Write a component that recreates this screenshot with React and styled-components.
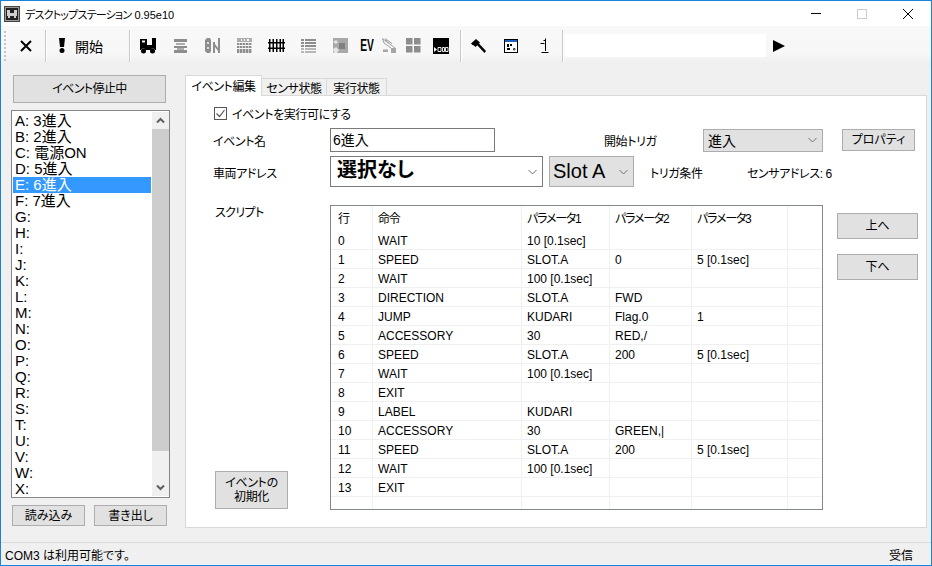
import React from "react";
import styled, { createGlobalStyle } from "styled-components";

const GlobalStyle = createGlobalStyle`
  html, body { margin: 0; padding: 0; background: #f0f0f0; }
  * { box-sizing: border-box; }
  body {
    font-family: "Liberation Sans", "Noto Sans CJK JP", sans-serif;
    font-size: 12px;
    color: #000;
    font-feature-settings: "palt";
  }
`;

const Window = styled.div`
  width: 932px;
  height: 566px;
  border: 1px solid #1883d7;
  background: #f0f0f0;
  display: flex;
  flex-direction: column;
  overflow: hidden;
`;

const TitleBar = styled.div`
  height: 25px;
  flex: none;
  background: #fff;
  display: flex;
  align-items: center;
  padding-left: 3px;
`;

const TitleText = styled.div`
  margin-left: 5px;
  font-size: 11px;
  flex: 1;
`;

const TitleKana = styled.span`
  letter-spacing: -0.8px;
`;

const WinButton = styled.div`
  width: 46px;
  height: 25px;
  display: flex;
  align-items: center;
  justify-content: center;
`;

const Toolbar = styled.div`
  height: 39px;
  flex: none;
  display: flex;
  align-items: center;
  background: linear-gradient(#f8f8f8 0%, #f7f7f7 70%, #eeeeee 100%);
  padding-left: 3px;
`;

const Grip = styled.div`
  width: 2px;
  height: 30px;
  margin-right: 4px;
  flex: none;
  background: repeating-linear-gradient(#c4c4c4 0 2px, transparent 2px 4px);
`;

const ToolSep = styled.div`
  width: 1px;
  height: 32px;
  background: #c8c8c8;
  box-shadow: 1px 0 0 #fff;
  flex: none;
  margin: ${(p) => p.$margin};
`;

const ToolIcon = styled.div`
  width: ${(p) => p.$w || 32}px;
  height: 24px;
  flex: none;
  display: flex;
  align-items: center;
  justify-content: center;
  color: ${(p) => (p.$off ? "#8d8d8d" : "#000")};
`;

const StartTool = styled(ToolIcon)`
  justify-content: flex-start;
  padding-left: 11px;
`;

const StartLabel = styled.span`
  font-size: 14px;
  margin-left: 10px;
`;

const EvLabel = styled.span`
  font-size: 16.5px;
  font-weight: 700;
  transform: scaleX(0.62);
`;

const ToolInput = styled.div`
  width: 201px;
  height: 23px;
  background: #fff;
  flex: none;
`;

const Body = styled.div`
  flex: 1;
  display: flex;
  padding: 10px 4px 16px 10px;
  gap: 15px;
  min-height: 0;
`;

const LeftColumn = styled.div`
  width: 159px;
  flex: none;
  display: flex;
  flex-direction: column;
`;

const Button = styled.div`
  background: #e1e1e1;
  border: 1px solid #adadad;
  display: flex;
  align-items: center;
  justify-content: center;
  text-align: center;
  font-size: 12px;
  line-height: 14px;
  flex: none;
  width: ${(p) => p.$w}px;
  height: ${(p) => p.$h}px;
`;

const StopButton = styled(Button)`
  margin: 0 0 7px 2px;
  letter-spacing: -0.6px;
`;

const ListBox = styled.div`
  width: 159px;
  height: 388px;
  flex: none;
  background: #fff;
  border: 1px solid #828790;
  padding: 2px 0 1px 1px;
  display: flex;
  overflow: hidden;
`;

const ListItems = styled.div`
  width: 138px;
  overflow: hidden;
  flex: none;
`;

const ListRow = styled.div`
  height: 16px;
  line-height: 16px;
  font-size: 15px;
  padding-left: 2px;
  white-space: nowrap;
  background: ${(p) => (p.$selected ? "#3399ff" : "transparent")};
  color: ${(p) => (p.$selected ? "#fff" : "#000")};
`;

const ScrollBar = styled.div`
  width: 17px;
  margin: -1px 0 0 1px;
  background: #f0f0f0;
  display: flex;
  flex-direction: column;
  flex: none;
`;

const ScrollArrow = styled.div`
  height: 17px;
  flex: none;
  display: flex;
  align-items: center;
  justify-content: center;
`;

const ScrollThumb = styled.div`
  flex: 1;
  background: #cdcdcd;
  margin-bottom: 28px;
`;

const FileButtons = styled.div`
  display: flex;
  gap: 9px;
  margin: 7px 0 0 1px;
`;

const RightColumn = styled.div`
  flex: 1;
  display: flex;
  flex-direction: column;
  min-width: 0;
`;

const Tabs = styled.div`
  display: flex;
  height: 21px;
  flex: none;
  align-items: flex-end;
  margin-bottom: -1px;
  position: relative;
  z-index: 1;
`;

const Tab = styled.div`
  height: ${(p) => (p.$active ? 21 : 18)}px;
  width: ${(p) => p.$w}px;
  background: ${(p) => (p.$active ? "#fff" : "#f0f0f0")};
  border: 1px solid #d9d9d9;
  border-left-width: ${(p) => (p.$active ? 1 : 0)}px;
  border-bottom-width: ${(p) => (p.$active ? 0 : 1)}px;
  display: flex;
  align-items: center;
  justify-content: center;
  font-size: 12px;
  letter-spacing: -0.4px;
  padding-bottom: ${(p) => (p.$active ? 1 : 0)}px;
`;

const Panel = styled.div`
  width: 742px;
  height: 433px;
  flex: none;
  background: #fff;
  border: 1px solid #d9d9d9;
  padding: 8px 0 0 27px;
  display: flex;
  flex-direction: column;
`;

const CheckRow = styled.div`
  display: flex;
  align-items: center;
  height: 18px;
  margin-left: 1px;
  gap: 5px;
  letter-spacing: -0.4px;
`;

const CheckBox = styled.div`
  width: 13px;
  height: 13px;
  border: 1px solid #555;
  background: #fff;
  display: flex;
  align-items: center;
  justify-content: center;
`;

const FormRow = styled.div`
  display: flex;
  align-items: center;
  flex: none;
  height: ${(p) => p.$h}px;
  margin-top: ${(p) => p.$top || 0}px;
`;

const FieldLabel = styled.div`
  width: ${(p) => p.$w}px;
  flex: none;
  font-size: 12px;
  letter-spacing: -0.4px;
  white-space: nowrap;
  padding-left: ${(p) => p.$pad || 0}px;
  padding-top: ${(p) => p.$drop || 0}px;
`;

const TextField = styled.div`
  width: 165px;
  height: 24px;
  border: 1px solid #7a7a7a;
  background: #fff;
  font-size: 14px;
  line-height: 22px;
  padding-left: 2px;
  flex: none;
`;

const Select = styled.div`
  width: ${(p) => p.$w}px;
  height: ${(p) => p.$h}px;
  flex: none;
  background: ${(p) => (p.$white ? "#fff" : "#e1e1e1")};
  border: 1px solid ${(p) => (p.$white ? "#7a7a7a" : "#adadad")};
  font-size: ${(p) => p.$size}px;
  font-weight: ${(p) => (p.$bold ? 700 : 400)};
  margin-left: ${(p) => p.$gap || 0}px;
  display: flex;
  align-items: center;
  justify-content: space-between;
  padding: 0 5px 0 ${(p) => p.$pad}px;
  white-space: nowrap;
`;

const LiftedText = styled.span`
  margin-top: -6px;
`;

const PropertyButton = styled(Button)`
  margin-left: 19px;
`;

const ScriptArea = styled.div`
  display: flex;
  flex: none;
  margin-top: 18px;
`;

const ScriptSide = styled.div`
  width: 117px;
  height: 305px;
  flex: none;
  display: flex;
  flex-direction: column;
  justify-content: space-between;
  padding-bottom: 1px;
`;

const ScriptLabel = styled.div`
  font-size: 12px;
  letter-spacing: -0.6px;
  margin: -2px 0 0 2px;
`;

const InitButton = styled(Button)`
  margin-left: 2px;
  letter-spacing: -0.3px;
`;

const Grid = styled.div`
  width: 493px;
  height: 305px;
  flex: none;
  border: 1px solid #828790;
  background: #fff;
  overflow: hidden;
`;

const GridRow = styled.div`
  display: grid;
  grid-template-columns: 42px 149px 88px 82px 96px 34px;
  height: ${(p) => (p.$head ? 25 : 19)}px;
  border-bottom: ${(p) => (p.$head ? "none" : "1px solid #f0f0f0")};
`;

const GridCell = styled.div`
  font-size: 12px;
  line-height: ${(p) => (p.$head ? 27 : 20)}px;
  letter-spacing: ${(p) => (p.$head ? "-1.2px" : "0")};
  padding-left: 5px;
  border-right: 1px solid #f0f0f0;
  white-space: nowrap;
  overflow: hidden;
  &:first-child {
    padding-left: 7px;
  }
  &:last-child {
    border-right: none;
  }
`;

const MoveButtons = styled.div`
  display: flex;
  flex-direction: column;
  gap: 15px;
  margin: 8px 0 0 14px;
`;

const StatusBar = styled.div`
  height: 23px;
  flex: none;
  border-top: 1px solid #dadada;
  display: flex;
  align-items: center;
  justify-content: space-between;
  padding: 0 18px 0 4px;
  font-size: 12px;
`;

const Chevron = ({ color = "#707070" }) => (
  <svg width="9" height="6" viewBox="0 0 9 6">
    <path d="M0.5 1 L4.5 5 L8.5 1" fill="none" stroke={color} strokeWidth="1" />
  </svg>
);

const ScrollChevron = ({ up }) => (
  <svg width="9" height="7" viewBox="0 0 9 7">
    <path d={up ? "M1 5.5 L4.5 2 L8 5.5" : "M1 1.5 L4.5 5 L8 1.5"} fill="none" stroke="#606060" strokeWidth="2" />
  </svg>
);

const AppIcon = () => (
  <svg width="16" height="16" viewBox="0 0 16 16">
    <rect x="0.5" y="0.5" width="15" height="15" fill="#9a9a9a" stroke="#444" />
    <rect x="2" y="2" width="12" height="12" fill="#222" />
    <path d="M3 4h3v3h4V4h3v6h-1v2h-2v-2H6v2H4v-2H3z" fill="#cfcfcf" />
  </svg>
);

const TrainIcon = () => (
  <svg width="16" height="16" viewBox="0 0 16 16" fill="currentColor">
    <path d="M0 1h7v6h5V0h4v12h-1a2.500 2.500 0 0 0-4.500 0H5.500a2.500 2.500 0 0 0-4.500 0H0z" />
    <path d="M2 2.500h3v2H2z" fill="#f7f7f7" />
    <circle cx="3.500" cy="13" r="2.500" />
    <circle cx="12.500" cy="13" r="2.500" />
  </svg>
);

const TurnoutIcon = () => (
  <svg width="13" height="14" viewBox="0 0 13 14" fill="currentColor">
    <path d="M0 0h13v3H0z" />
    <path d="M2 4h9v2H2z" opacity="0.7" />
    <path d="M0 7h13v2H0z" />
    <path d="M3 9h7v2H3z" opacity="0.7" />
    <path d="M0 11h13v3H0z" />
  </svg>
);

const SignalIcon = () => (
  <svg width="15" height="15" viewBox="0 0 15 15" fill="currentColor">
    <path d="M2 0h3l1 2v11l-1 2H2l-2-2V2z" />
    <circle cx="3" cy="5" r="1" fill="#f7f7f7" />
    <circle cx="3" cy="10" r="1" fill="#f7f7f7" />
    <path d="M8 4h2v11H8zM13 0h2v15h-2zM10 6l3 4v3l-3-4z" />
  </svg>
);

const DecoderIcon = () => (
  <svg width="15" height="15" viewBox="0 0 15 15" fill="currentColor">
    <path d="M0 0h15v4H0z" opacity="0.7" />
    <path d="M4 1h1v2H4zM7 1h1v2H7zM10 1h2v2h-2z" fill="#f7f7f7" />
    {[5, 8, 11, 13].map((y) =>
      [0, 3, 6, 9, 12].map((x) => <rect key={`${x}-${y}`} x={x} y={y} width="2.400" height="2" />)
    )}
  </svg>
);

const RailIcon = () => (
  <svg width="17" height="13" viewBox="0 0 17 13" fill="currentColor">
    <path d="M0 3h17v1.500H0zM0 8.500h17V10H0z" />
    {[1, 4.5, 8, 11.5, 14.5].map((x) => (
      <rect key={x} x={x} y="0" width="1.500" height="13" />
    ))}
  </svg>
);

const ListIcon = () => (
  <svg width="15" height="14" viewBox="0 0 15 14" fill="currentColor">
    {[0, 3, 6, 9, 12].map((y) => (
      <g key={y} opacity={y > 6 ? 0.6 : 1}>
        <rect x="0" y={y} width="3" height="2" />
        <rect x="4" y={y} width="11" height="2" />
      </g>
    ))}
  </svg>
);

const MapIcon = () => (
  <svg width="15" height="15" viewBox="0 0 15 15">
    <rect x="0" y="0" width="15" height="15" fill="#a8a8a8" />
    <rect x="6" y="5" width="6" height="6" fill="#808080" />
    <path d="M0 4l3-2 2 2-2 2zM0 11l3-2 3 3-2 3H1z" fill="#e4e4e4" />
  </svg>
);

const CraneIcon = () => (
  <svg width="15" height="16" viewBox="0 0 15 16" fill="none" stroke="#9c9c9c">
    <path d="M0.500 0.500 L13 10 M3 0.500 L10 5.500 M0.500 0.500 L2 5 L9 10 M3 3 L5 2.500 M5 5 L7 4" />
    <path d="M1 11.500h5V14H1zM9 10h5v5H9z" fill="#a6a6a6" stroke="none" />
  </svg>
);

const TilesIcon = () => (
  <svg width="15" height="15" viewBox="0 0 15 15" fill="currentColor">
    <rect x="0" y="0" width="6.500" height="6.500" />
    <rect x="8" y="0" width="6.500" height="6.500" />
    <rect x="0" y="8" width="6.500" height="6.500" />
    <rect x="8" y="8" width="6.500" height="6.500" />
  </svg>
);

const ComIcon = () => (
  <svg width="16" height="16" viewBox="0 0 16 16">
    <rect width="16" height="16" fill="#000" />
    <path d="M1 9l3 2.500-3 2.500z" fill="#fff" />
    <path d="M5 9.500h3v4H5zM9.500 9.500h2v4h-2zM12.500 9.500h2.500v4h-2.500z" fill="none" stroke="#fff" strokeWidth="0.900" />
  </svg>
);

const HammerIcon = () => (
  <svg width="15" height="14" viewBox="0 0 15 14" fill="#000">
    <path d="M0 4.500L5 0l4 3.500-4.500 4.500L3 6.500 1.500 6z" />
    <path d="M5.500 5.500L7.500 4 15 12l-1.500 2z" />
  </svg>
);

const PanelIcon = () => (
  <svg width="14" height="14" viewBox="0 0 14 14">
    <rect x="0.500" y="0.500" width="13" height="13" fill="#fff" stroke="#000" />
    <rect x="1" y="1" width="12" height="2" fill="#1f5fbf" />
    <path d="M3 5h2v3H3zM6 5h2v2H6zM3 9h3v2H3z" fill="#000" />
    <path d="M9.500 9.500h1.500v1.500H9.500z" fill="none" stroke="#000" strokeWidth="0.700" />
  </svg>
);

const InfoIcon = () => (
  <svg width="9" height="16" viewBox="0 0 9 16" fill="none" stroke="#000">
    <path d="M3.500 2.500h2M5.500 0.500v12.500M0.500 5.500h4M1.500 14.500h7" />
  </svg>
);

const PlayIcon = () => (
  <svg width="12" height="12" viewBox="0 0 12 12">
    <path d="M0 0 L12 6 L0 12z" fill="#000" />
  </svg>
);

const events = [
  "A: 3進入", "B: 2進入", "C: 電源ON", "D: 5進入", "E: 6進入", "F: 7進入",
  "G:", "H:", "I:", "J:", "K:", "L:", "M:", "N:", "O:", "P:", "Q:", "R:", "S:",
  "T:", "U:", "V:", "W:", "X:",
];

const rows = [
  ["0", "WAIT", "10 [0.1sec]", "", ""],
  ["1", "SPEED", "SLOT.A", "0", "5 [0.1sec]"],
  ["2", "WAIT", "100 [0.1sec]", "", ""],
  ["3", "DIRECTION", "SLOT.A", "FWD", ""],
  ["4", "JUMP", "KUDARI", "Flag.0", "1"],
  ["5", "ACCESSORY", "30", "RED,/", ""],
  ["6", "SPEED", "SLOT.A", "200", "5 [0.1sec]"],
  ["7", "WAIT", "100 [0.1sec]", "", ""],
  ["8", "EXIT", "", "", ""],
  ["9", "LABEL", "KUDARI", "", ""],
  ["10", "ACCESSORY", "30", "GREEN,|", ""],
  ["11", "SPEED", "SLOT.A", "200", "5 [0.1sec]"],
  ["12", "WAIT", "100 [0.1sec]", "", ""],
  ["13", "EXIT", "", "", ""],
  ["", "", "", "", ""],
];

export default function App() {
  return (
    <Window>
      <GlobalStyle />
      <TitleBar>
        <AppIcon />
        <TitleText><TitleKana>デスクトップステーション</TitleKana> 0.95e10</TitleText>
        <WinButton>
          <svg width="10" height="1"><rect width="10" height="1" fill="#000" /></svg>
        </WinButton>
        <WinButton>
          <svg width="10" height="10"><rect x="0.500" y="0.500" width="9" height="9" fill="none" stroke="#ccc" /></svg>
        </WinButton>
        <WinButton>
          <svg width="10" height="10"><path d="M0 0L10 10M10 0L0 10" stroke="#000" /></svg>
        </WinButton>
      </TitleBar>
      <Toolbar>
        <Grip />
        <ToolIcon>
          <svg width="12" height="12" viewBox="0 0 12 12"><path d="M1 1L11 11M11 1L1 11" stroke="#000" strokeWidth="2" /></svg>
        </ToolIcon>
        <ToolSep $margin="0 2px 0 3px" />
        <StartTool $w={78}>
          <svg width="6" height="15" viewBox="0 0 6 15"><path d="M0 0h6L5 9H1z" fill="#000" /><circle cx="3" cy="12.500" r="2.500" fill="#000" /></svg>
          <StartLabel>開始</StartLabel>
        </StartTool>
        <ToolSep $margin="0 2px 0 3px" />
        <ToolIcon><TrainIcon /></ToolIcon>
        <ToolIcon $off><TurnoutIcon /></ToolIcon>
        <ToolIcon $off><SignalIcon /></ToolIcon>
        <ToolIcon $off><DecoderIcon /></ToolIcon>
        <ToolIcon><RailIcon /></ToolIcon>
        <ToolIcon $off><ListIcon /></ToolIcon>
        <ToolIcon><MapIcon /></ToolIcon>
        <ToolIcon $w={22}><EvLabel>EV</EvLabel></ToolIcon>
        <ToolIcon $w={22}><CraneIcon /></ToolIcon>
        <ToolIcon $off $w={26}><TilesIcon /></ToolIcon>
        <ToolIcon $w={30}><ComIcon /></ToolIcon>
        <ToolSep $margin="0 1px 0 4px" />
        <ToolIcon><HammerIcon /></ToolIcon>
        <ToolIcon $w={34}><PanelIcon /></ToolIcon>
        <ToolIcon><InfoIcon /></ToolIcon>
        <ToolSep $margin="0 2px" />
        <ToolInput />
        <ToolIcon $w={26}><PlayIcon /></ToolIcon>
      </Toolbar>
      <Body>
        <LeftColumn>
          <StopButton $w={153} $h={28}>イベント停止中</StopButton>
          <ListBox>
            <ListItems>
              {events.map((e, i) => (
                <ListRow key={e} $selected={i === 4}>{e}</ListRow>
              ))}
            </ListItems>
            <ScrollBar>
              <ScrollArrow><ScrollChevron up /></ScrollArrow>
              <ScrollThumb />
              <ScrollArrow><ScrollChevron /></ScrollArrow>
            </ScrollBar>
          </ListBox>
          <FileButtons>
            <Button $w={73} $h={21}>読み込み</Button>
            <Button $w={73} $h={21}>書き出し</Button>
          </FileButtons>
        </LeftColumn>
        <RightColumn>
          <Tabs>
            <Tab $active $w={77}>イベント編集</Tab>
            <Tab $w={65}>センサ状態</Tab>
            <Tab $w={60}>実行状態</Tab>
          </Tabs>
          <Panel>
            <CheckRow>
              <CheckBox>
                <svg width="11" height="11" viewBox="0 0 11 11"><path d="M1.500 5.500L4.500 8.500L9.500 2" fill="none" stroke="#555" strokeWidth="1.200" /></svg>
              </CheckBox>
              イベントを実行可にする
            </CheckRow>
            <FormRow $h={24} $top={6}>
              <FieldLabel $w={117}>イベント名</FieldLabel>
              <TextField>6進入</TextField>
              <FieldLabel $w={208} $pad={109}>開始トリガ</FieldLabel>
              <Select $w={120} $h={23} $size={14} $pad={4}>進入<Chevron /></Select>
              <PropertyButton $w={73} $h={22}>プロパティ</PropertyButton>
            </FormRow>
            <FormRow $h={31} $top={4}>
              <FieldLabel $w={117} $drop={2}>車両アドレス</FieldLabel>
              <Select $white $w={213} $h={31} $size={20} $bold $pad={6}>
                <LiftedText>選択なし</LiftedText>
                <Chevron />
              </Select>
              <Select $w={85} $h={31} $size={20} $pad={3} $gap={6}>Slot A<Chevron /></Select>
              <FieldLabel $w={113} $pad={16} $drop={2}>トリガ条件</FieldLabel>
              <FieldLabel $w={100} $drop={2}>センサアドレス: 6</FieldLabel>
            </FormRow>
            <ScriptArea>
              <ScriptSide>
                <ScriptLabel>スクリプト</ScriptLabel>
                <InitButton $w={73} $h={38}>イベントの<br />初期化</InitButton>
              </ScriptSide>
              <Grid>
                <GridRow $head>
                  {["行", "命令", "パラメータ1", "パラメータ2", "パラメータ3", ""].map((h, i) => (
                    <GridCell key={i} $head>{h}</GridCell>
                  ))}
                </GridRow>
                {rows.map((r, ri) => (
                  <GridRow key={ri}>
                    {[...r, ""].map((c, ci) => (
                      <GridCell key={ci}>{c}</GridCell>
                    ))}
                  </GridRow>
                ))}
              </Grid>
              <MoveButtons>
                <Button $w={81} $h={26}>上へ</Button>
                <Button $w={81} $h={26}>下へ</Button>
              </MoveButtons>
            </ScriptArea>
          </Panel>
        </RightColumn>
      </Body>
      <StatusBar>
        <span>COM3 は利用可能です。</span>
        <span>受信</span>
      </StatusBar>
    </Window>
  );
}
